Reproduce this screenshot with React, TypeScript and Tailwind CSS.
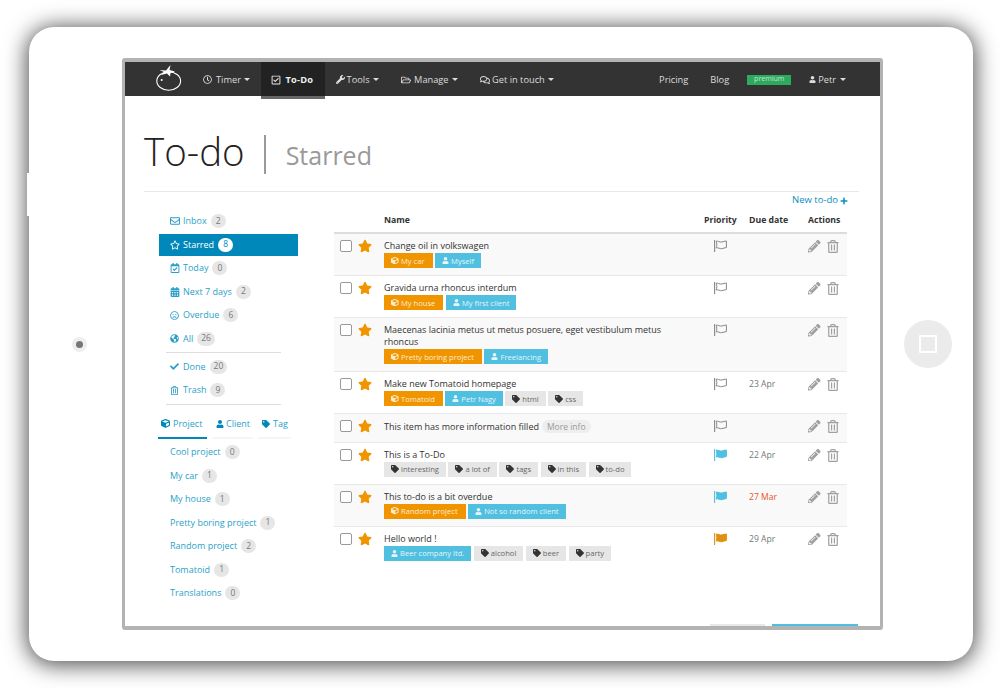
import type { ReactNode } from "react";
import {
  FaCalendarAlt,
  FaCheck,
  FaCube,
  FaGlobeAmericas,
  FaPencilAlt,
  FaPlus,
  FaRegCalendarCheck,
  FaRegCheckSquare,
  FaRegClock,
  FaRegComments,
  FaRegEnvelope,
  FaRegFolderOpen,
  FaRegFrown,
  FaRegStar,
  FaRegTrashAlt,
  FaStar,
  FaTag,
  FaUser,
  FaWrench,
} from "react-icons/fa";

type Tag = { kind: "project" | "client" | "tag"; label: string };
type Todo = {
  name: string;
  tags: Tag[];
  flag?: "blue" | "orange";
  due?: string;
  late?: boolean;
  more?: boolean;
};

const todos: Todo[] = [
  {
    name: "Change oil in volkswagen",
    tags: [
      { kind: "project", label: "My car" },
      { kind: "client", label: "Myself" },
    ],
  },
  {
    name: "Gravida urna rhoncus interdum",
    tags: [
      { kind: "project", label: "My house" },
      { kind: "client", label: "My first client" },
    ],
  },
  {
    name: "Maecenas lacinia metus ut metus posuere, eget vestibulum metus rhoncus",
    tags: [
      { kind: "project", label: "Pretty boring project" },
      { kind: "client", label: "Freelancing" },
    ],
  },
  {
    name: "Make new Tomatoid homepage",
    due: "23 Apr",
    tags: [
      { kind: "project", label: "Tomatoid" },
      { kind: "client", label: "Petr Nagy" },
      { kind: "tag", label: "html" },
      { kind: "tag", label: "css" },
    ],
  },
  { name: "This item has more information filled", more: true, tags: [] },
  {
    name: "This is a To-Do",
    flag: "blue",
    due: "22 Apr",
    tags: [
      { kind: "tag", label: "interesting" },
      { kind: "tag", label: "a lot of" },
      { kind: "tag", label: "tags" },
      { kind: "tag", label: "in this" },
      { kind: "tag", label: "to-do" },
    ],
  },
  {
    name: "This to-do is a bit overdue",
    flag: "blue",
    due: "27 Mar",
    late: true,
    tags: [
      { kind: "project", label: "Random project" },
      { kind: "client", label: "Not so random client" },
    ],
  },
  {
    name: "Hello world !",
    flag: "orange",
    due: "29 Apr",
    tags: [
      { kind: "client", label: "Beer company ltd." },
      { kind: "tag", label: "alcohol" },
      { kind: "tag", label: "beer" },
      { kind: "tag", label: "party" },
    ],
  },
];

const Caret = () => (
  <span className="ml-[1.5px] inline-block border-x-[3px] border-t-[3px] border-x-transparent border-t-[#ddd]" />
);

const Logo = () => (
  <svg viewBox="0 0 26 28" className="mt-[3px] h-[28px] w-[26px]" fill="none" stroke="#fff" aria-hidden>
    <ellipse cx="12.7" cy="16" rx="11.9" ry="9.2" strokeWidth="1.1" />
    <path
      d="M14.5 0 L13.5 5 L19 6.5 L14.5 8 L14 11.5 L11 8.5 L5 10 L8 7 L3.5 5 L10 5.5 Z"
      fill="#fff"
      stroke="none"
    />
    <circle cx="5.7" cy="15" r="1" fill="#fff" stroke="none" />
  </svg>
);

const NavItem = ({ icon, label }: { icon: ReactNode; label: string }) => (
  <a className="flex h-[34px] items-center gap-[2px] px-[11px] pt-[1px] text-[9.25px] text-[#ddd]">
    {icon}
    <span>{label}</span>
    <Caret />
  </a>
);

const Nav = () => (
  <nav className="flex h-[34px] shrink-0 items-start bg-[#333] pl-[31px]">
    <div className="mr-[10px] h-[34px]">
      <Logo />
    </div>
    <NavItem icon={<FaRegClock className="mr-[2px] size-[9px]" />} label="Timer" />
    <a className="flex h-[37px] items-center gap-[4px] border-b-[3px] border-[#666] bg-[#222] pl-[10px] pr-[11.5px] pt-[1px] text-[9.25px] font-bold tracking-[0.2px] text-[#eee]">
      <FaRegCheckSquare className="size-[10px]" />
      <span>To-Do</span>
    </a>
    <NavItem icon={<FaWrench className="size-[9px]" />} label="Tools" />
    <NavItem icon={<FaRegFolderOpen className="mr-[1px] size-[10px]" />} label="Manage" />
    <NavItem icon={<FaRegComments className="size-[10px]" />} label="Get in touch" />
    <div className="ml-auto flex h-[34px] items-center pr-[34.5px] pt-[1px] text-[9.25px] text-[#ddd]">
      <a>Pricing</a>
      <a className="ml-[22px]">Blog</a>
      <span className="ml-[18px] flex h-[10px] w-[44px] items-center justify-center bg-[#2eaa5e] text-[7px] text-[#bfe8cf]">
        premium
      </span>
      <a className="ml-[18px] flex items-center gap-[2px]">
        <FaUser className="size-[7px]" />
        <span>Petr</span>
        <Caret />
      </a>
    </div>
  </nav>
);

const Badge = ({ n, active }: { n: number; active?: boolean }) => (
  <span
    className={
      active
        ? "ml-[4px] flex h-[14px] min-w-[15px] items-center justify-center rounded-full bg-white px-[3px] text-[8.5px] text-[#0088bb]"
        : "ml-[4px] flex h-[14px] min-w-[15px] items-center justify-center rounded-full bg-[#e6e6e6] px-[4px] text-[8.5px] text-[#777]"
    }
  >
    {n}
  </span>
);

const SideItem = ({
  icon,
  label,
  n,
  active,
}: {
  icon: ReactNode;
  label: string;
  n: number;
  active?: boolean;
}) => (
  <a
    className={
      active
        ? "mb-[1.5px] flex h-[22px] items-center bg-[#0088bb] pl-[11px] text-[9px] text-white"
        : "mb-[1.5px] flex h-[22px] items-center pl-[11px] text-[9px] text-[#2a9fc9]"
    }
  >
    <span className="flex w-[13px] items-center">{icon}</span>
    <span>{label}</span>
    <Badge n={n} active={active} />
  </a>
);

const Sidebar = () => (
  <aside className="ml-[34px] w-[139px] shrink-0 pt-[18px]">
    <SideItem icon={<FaRegEnvelope className="size-[10px]" />} label="Inbox" n={2} />
    <SideItem icon={<FaRegStar className="size-[10px]" />} label="Starred" n={8} active />
    <SideItem icon={<FaRegCalendarCheck className="size-[10px]" />} label="Today" n={0} />
    <SideItem icon={<FaCalendarAlt className="size-[10px]" />} label="Next 7 days" n={2} />
    <SideItem icon={<FaRegFrown className="size-[9px]" />} label="Overdue" n={6} />
    <SideItem icon={<FaGlobeAmericas className="size-[9px]" />} label="All" n={26} />
    <div className="mx-[7px] mb-[3px] mt-[2px] w-[115px] border-t border-[#ddd]" />
    <SideItem icon={<FaCheck className="size-[9px]" />} label="Done" n={20} />
    <SideItem icon={<FaRegTrashAlt className="size-[9px]" />} label="Trash" n={9} />
    <div className="mx-[7px] mt-[3px] w-[115px] border-t border-[#ddd]" />
    <div className="mt-[6px] flex items-stretch text-[9px] text-[#2a9fc9]">
      <a className="-ml-[1px] flex h-[28px] w-[49px] items-center gap-[3px] border-b-2 border-[#0088bb] pb-[1px] pl-[3px]">
        <FaCube className="size-[9px] text-[#0088bb]" />
        Project
      </a>
      <a className="ml-[5px] flex h-[28px] w-[41px] items-center gap-[2px] border-b-2 border-[#f6f6f6] pb-[1px] pl-[4px]">
        <FaUser className="size-[8px] text-[#0088bb]" />
        Client
      </a>
      <a className="ml-[5px] flex h-[28px] w-[33px] items-center gap-[3px] border-b-2 border-[#f6f6f6] pb-[1px] pl-[4px]">
        <FaTag className="size-[8px] text-[#0088bb]" />
        Tag
      </a>
    </div>
    <div className="mt-[2px]">
      {[
        ["Cool project", 0],
        ["My car", 1],
        ["My house", 1],
        ["Pretty boring project", 1],
        ["Random project", 2],
        ["Tomatoid", 1],
        ["Translations", 0],
      ].map(([label, n]) => (
        <a key={label} className="mb-[1.5px] flex h-[22px] items-center pl-[11px] text-[9px] text-[#2a9fc9]">
          {label}
          <Badge n={n as number} />
        </a>
      ))}
    </div>
  </aside>
);

const TagChip = ({ tag }: { tag: Tag }) => {
  if (tag.kind === "project") {
    return (
      <span className="flex h-[15px] items-center gap-[2.5px] bg-[#f09400] pl-[7px] pr-[8px] text-[7.6px] text-[#fdeed2]">
        <FaCube className="size-[7.5px]" />
        {tag.label}
      </span>
    );
  }
  if (tag.kind === "client") {
    return (
      <span className="flex h-[15px] items-center gap-[2px] bg-[#50bfe0] px-[7px] text-[7.6px] text-[#e4f6fb]">
        <FaUser className="size-[7px]" />
        {tag.label}
      </span>
    );
  }
  return (
    <span className="flex h-[15px] items-center gap-[2px] bg-[#e6e6e6] px-[7px] text-[7.6px] text-[#666]">
      <FaTag className="size-[8px] text-[#333]" />
      {tag.label}
    </span>
  );
};

const Flag = ({ flag }: { flag?: Todo["flag"] }) => {
  const color = flag === "blue" ? "text-[#50bfe0]" : flag === "orange" ? "text-[#e09010]" : "text-[#888]";
  return (
    <svg viewBox="0 0 13 12" className={`h-[12px] w-[13px] ${color}`} stroke="currentColor" aria-hidden>
      <path d="M0.6 0 V12" strokeWidth="1.1" fill="none" />
      <path
        d="M2.2 1.2 C4 0.6 5.6 2.6 8 2 C9.4 1.7 10.8 1 12.4 1 V7.6 C10.6 7.6 9.4 8.4 7.8 8.7 C5.6 9 4.2 7.2 2.2 8 C3 6 3 3.4 2.2 1.2 Z"
        strokeWidth="1"
        fill={flag ? "currentColor" : "none"}
      />
    </svg>
  );
};

const Row = ({ todo, shaded, last }: { todo: Todo; shaded: boolean; last: boolean }) => (
  <div
    className={`grid grid-cols-[50px_320px_45px_59px_39px] border-b pt-[6px] ${
      todo.more ? "pb-[8.5px]" : "pb-[7px]"
    } ${last ? "border-transparent" : "border-[#e8e8e8]"} ${shaded ? "bg-[#f9f9f9]" : "bg-white"}`}
  >
    <div className="flex items-start gap-[6px] pl-[6px]">
      <input
        type="checkbox"
        className="size-[12px] appearance-none rounded-[2px] border-[1.5px] border-[#999] bg-white"
      />
      <FaStar className="-mt-[1px] size-[14px] text-[#f09400]" />
    </div>
    <div className="text-[9px] leading-[12px] text-[#333]">
      <div className="flex w-[300px] items-center">
        <span>{todo.name}</span>
        {todo.more && (
          <span className="ml-[3px] flex h-[13px] items-center rounded-full bg-[#eee] px-[5px] text-[8.5px] text-[#999]">
            More info
          </span>
        )}
      </div>
      {todo.tags.length > 0 && (
        <div className="mt-[1px] flex gap-[2.5px]">
          {todo.tags.map((tag) => (
            <TagChip key={tag.label} tag={tag} />
          ))}
        </div>
      )}
    </div>
    <div className="pl-[10px]">
      <Flag flag={todo.flag} />
    </div>
    <div className={`text-[8.6px] leading-[12px] ${todo.late ? "text-[#e8561f]" : "text-[#777]"}`}>
      {todo.due}
    </div>
    <div className="flex items-start gap-[6px] text-[#a0a0a0]">
      <FaPencilAlt className="size-[12.5px]" />
      <FaRegTrashAlt className="h-[13px] w-[12px]" />
    </div>
  </div>
);

const TodoTable = () => (
  <main className="ml-[36px] w-[513px] shrink-0">
    <div className="-mr-[1px] flex h-[17px] items-center justify-end text-[9.5px] text-[#0a8fc0]">
      New to-do
      <FaPlus className="ml-[2px] size-[8px]" />
    </div>
    <div className="grid h-[25px] grid-cols-[50px_320px_45px_59px_39px] items-center border-b-2 border-[#ddd] text-[8.7px] font-bold text-[#333]">
      <span />
      <span>Name</span>
      <span>Priority</span>
      <span>Due date</span>
      <span>Actions</span>
    </div>
    {todos.map((todo, i) => (
      <Row key={todo.name} todo={todo} shaded={i % 2 === 0} last={i === todos.length - 1} />
    ))}
  </main>
);

const Screen = () => (
  <div className="flex h-[572px] w-[761px] shrink-0 flex-col overflow-hidden rounded-[3px] border-[3px] border-b-4 border-t-4 border-[#b3b3b3] bg-white">
    <Nav />
    <header className="ml-[19px] mr-[21px] flex h-[96px] shrink-0 items-start border-b border-[#e8e8e8] pt-[30px]">
      <h1 className="text-[38.5px] font-light leading-[50px] text-[#222]">To-do</h1>
      <span className="ml-[19px] mt-[9px] h-[39px] w-[2px] bg-[#999]" />
      <span className="ml-[20px] mt-[11px] text-[25px] leading-[36px] text-[#999]">Starred</span>
    </header>
    <div className="flex min-h-0 flex-1">
      <Sidebar />
      <TodoTable />
    </div>
    <div className="flex h-[2px] shrink-0 justify-end gap-[7px] pr-[22px]">
      <span className="w-[55px] bg-[#e8e8e8]" />
      <span className="w-[86px] bg-[#50bfe0]" />
    </div>
  </div>
);

export default function App() {
  return (
    <div className="h-[688px] w-[1000px] overflow-hidden bg-white pl-[29px] pt-[27px] font-['Open_Sans',sans-serif]">
      <div className="relative flex h-[634px] w-[944px] items-center rounded-[25px] bg-white shadow-[0_2px_22px_2px_rgba(0,0,0,0.7)]">
        <div className="absolute -left-[2px] top-[146px] h-[43px] w-[3px] bg-white" />
        <div className="flex w-[93px] shrink-0 pl-[43px]">
          <span className="flex size-[15px] items-center justify-center rounded-full bg-[#eee]">
            <span className="size-[7px] rounded-full bg-[#777]" />
          </span>
        </div>
        <Screen />
        <div className="flex shrink-0 pl-[21px]">
          <span className="flex size-[48px] items-center justify-center rounded-full bg-[#ebebeb]">
            <span className="size-[18px] rounded-[1px] border-2 border-white" />
          </span>
        </div>
      </div>
    </div>
  );
}
